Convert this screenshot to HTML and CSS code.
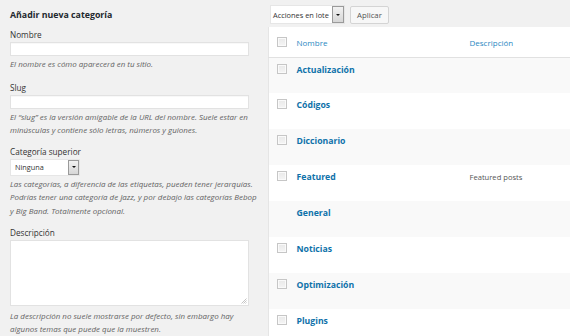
FILE: index.html
```html
<!DOCTYPE html>
<html lang="es">
<head>
<meta charset="utf-8">
<link rel="stylesheet" href="styles.css">
</head>
<body>
<div class="page">
  <div class="left">
    <h2 class="form-title">Añadir nueva categoría</h2>
    <div class="field">
      <label class="label">Nombre</label>
      <input class="text-input" type="text">
      <p class="help">El nombre es cómo aparecerá en tu sitio.</p>
    </div>
    <div class="field field-slug">
      <label class="label">Slug</label>
      <input class="text-input" type="text">
      <p class="help">El “slug” es la versión amigable de la URL del nombre. Suele estar en minúsculas y contiene sólo letras, números y guiones.</p>
    </div>
    <div class="field">
      <label class="label">Categoría superior</label>
      <div class="select select-parent"><span class="select-text">Ninguna</span><span class="select-arrow"></span></div>
      <p class="help">Las categorías, a diferencia de las etiquetas, pueden tener jerarquías. Podrías tener una categoría de Jazz, y por debajo las categorías Bebop y Big Band. Totalmente opcional.</p>
    </div>
    <div class="field field-last">
      <label class="label">Descripción</label>
      <div class="textarea-wrap">
        <textarea class="textarea"></textarea>
        <svg class="grip" width="6" height="6" viewBox="0 0 6 6"><path d="M5.5 0.5 L0.5 5.5 M5.5 2.5 L2.5 5.5 M5.5 4.5 L4.5 5.5" stroke="#c4c4c4" stroke-width="1" fill="none"/></svg>
      </div>
      <p class="help">La descripción no suele mostrarse por defecto, sin embargo hay algunos temas que puede que la muestren.</p>
    </div>
  </div>
  <div class="right">
    <div class="toolbar">
      <div class="select select-bulk"><span class="select-text">Acciones en lote</span><span class="select-arrow"></span></div>
      <button class="btn">Aplicar</button>
    </div>
    <table class="list">
      <thead>
        <tr class="head">
          <th class="cb"><span class="checkbox"></span></th>
          <th class="col-name"><a class="sort-link">Nombre</a></th>
          <th class="col-desc"><a class="sort-link">Descripción</a></th>
        </tr>
      </thead>
      <tbody>
        <tr class="row alt"><td class="cb"><span class="checkbox"></span></td><td><a class="row-title">Actualización</a></td><td class="desc"></td></tr>
        <tr class="row"><td class="cb"><span class="checkbox"></span></td><td><a class="row-title">Códigos</a></td><td class="desc"></td></tr>
        <tr class="row alt"><td class="cb"><span class="checkbox"></span></td><td><a class="row-title">Diccionario</a></td><td class="desc"></td></tr>
        <tr class="row"><td class="cb"><span class="checkbox"></span></td><td><a class="row-title">Featured</a></td><td class="desc">Featured posts</td></tr>
        <tr class="row alt"><td class="cb"></td><td><a class="row-title">General</a></td><td class="desc"></td></tr>
        <tr class="row"><td class="cb"><span class="checkbox"></span></td><td><a class="row-title">Noticias</a></td><td class="desc"></td></tr>
        <tr class="row alt"><td class="cb"><span class="checkbox"></span></td><td><a class="row-title">Optimización</a></td><td class="desc"></td></tr>
        <tr class="row"><td class="cb"><span class="checkbox"></span></td><td><a class="row-title">Plugins</a></td><td class="desc"></td></tr>
      </tbody>
    </table>
  </div>
</div>
</body>
</html>
```

FILE: styles.css
```css
html, body {
  margin: 0;
  padding: 0;
  background: #f1f1f1;
  font-family: "Open Sans", "Liberation Sans", sans-serif;
  color: #444;
  overflow: hidden;
}
.page {
  display: flex;
  width: 570px;
  height: 336px;
  overflow: hidden;
}
.left {
  width: 252px;
  padding: 9px 6px 0 10px;
  flex: none;
}
.form-title {
  margin: 0 0 8px;
  font-size: 8.8px;
  line-height: 12px;
  font-weight: 700;
  color: #23282d;
}
.field {
  margin-bottom: 10px;
}
.field-slug {
  margin-bottom: 8px;
}
.label {
  display: block;
  font-size: 8.2px;
  line-height: 12px;
  color: #333;
  margin-bottom: 1px;
}
.text-input {
  display: block;
  box-sizing: border-box;
  width: 239px;
  height: 14px;
  margin: 0;
  padding: 0;
  border: 1px solid #e2e2e2;
  background: #fff;
  box-shadow: inset 0 1px 1px rgba(0,0,0,0.03);
}
.help {
  margin: 2px 0 0;
  font-size: 7.95px;
  line-height: 13.5px;
  font-style: italic;
  color: #636363;
}
.select {
  display: flex;
  align-items: center;
  box-sizing: border-box;
  background: #fff;
  border: 1px solid #e6e6e6;
}
.select-parent {
  width: 70px;
  height: 17px;
}
.select-text {
  flex: 1;
  font-size: 7.3px;
  color: #333;
  padding-left: 4px;
  white-space: nowrap;
}
.select-arrow {
  flex: none;
  width: 11px;
  height: 100%;
  box-sizing: border-box;
  border: 1px solid #9a9a9a;
  background: linear-gradient(#f2f2f2, #d6d6d6);
  position: relative;
}
.select-arrow::after {
  content: "";
  position: absolute;
  left: 2.5px;
  top: 50%;
  margin-top: -1px;
  border-left: 2px solid transparent;
  border-right: 2px solid transparent;
  border-top: 2.5px solid #111;
}
.textarea-wrap {
  position: relative;
  width: 239px;
}
.textarea {
  display: block;
  box-sizing: border-box;
  width: 239px;
  height: 66px;
  margin: 0;
  border: 1px solid #e2e2e2;
  background: #fff;
  resize: none;
}
.grip {
  position: absolute;
  right: 2px;
  bottom: 2px;
}
.field-last {
  margin-top: -1px;
}
.field-last .help {
  margin-top: 4px;
  line-height: 13px;
}
.right {
  flex: 1;
  min-width: 0;
}
.toolbar {
  display: flex;
  align-items: center;
  gap: 5px;
  padding: 5px 0 0 2px;
  height: 19px;
}
.select-bulk {
  width: 75px;
  height: 19px;
}
.select-bulk .select-text {
  padding-left: 2px;
  font-size: 7.4px;
}
.select-bulk .select-arrow {
  width: 12px;
}
.select-bulk .select-arrow::after {
  left: 3px;
}
.btn {
  height: 18px;
  margin: 1px 0 0;
  padding: 0 6px;
  border: 1px solid #d4d4d4;
  border-radius: 2px;
  background: #f7f7f7;
  font-family: inherit;
  font-size: 7.8px;
  color: #555;
}
.list {
  margin-top: 3px;
  width: 302px;
  border-collapse: collapse;
  table-layout: fixed;
  border-left: 1px solid #e5e5e5;
}
.cb {
  width: 28px;
  padding: 0 0 0 8px;
  box-sizing: border-box;
}
.col-name {
  width: 173px;
}
th {
  text-align: left;
  font-weight: 400;
  padding: 0;
  line-height: 12px;
}
td {
  padding: 0;
  vertical-align: top;
}
.head {
  height: 30px;
  background: #fff;
  border-bottom: 1px solid #e1e1e1;
}
.head th {
  vertical-align: middle;
}
.sort-link {
  font-size: 8px;
  color: #2a88c2;
}
.row {
  height: 36px;
  background: #fff;
}
.row.alt {
  background: #f9f9f9;
}
.row td {
  padding-top: 3px;
  line-height: 12px;
}
.row td.cb {
  padding-top: 6px;
  padding-left: 8px;
}
.row td.desc {
  padding-top: 6px;
}
.row-title {
  font-size: 8.7px;
  font-weight: 700;
  color: #0f72aa;
}
.desc {
  font-size: 7.6px;
  color: #555;
}
.checkbox {
  display: block;
  box-sizing: border-box;
  width: 10px;
  height: 10px;
  border: 1px solid #c6c6c6;
  background: linear-gradient(#e9e9e9, #f5f5f5);
  box-shadow: inset 0 0 0 1px #fafafa;
}
```
